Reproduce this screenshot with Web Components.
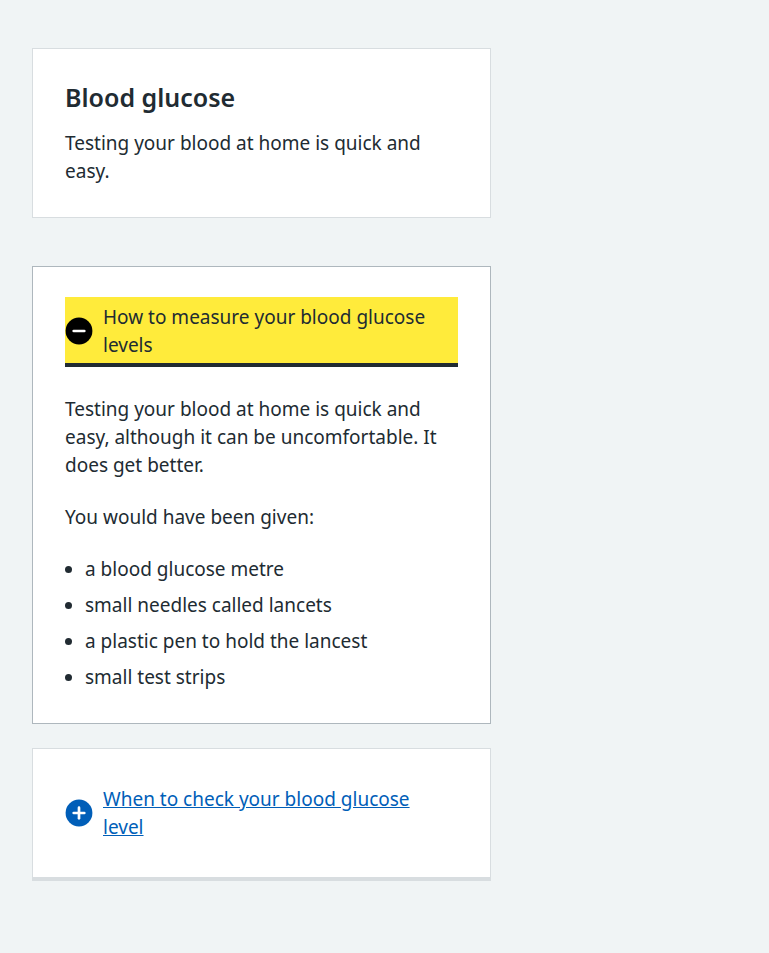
<!DOCTYPE html>
<html lang="en">
<head>
<meta charset="utf-8">
<meta name="viewport" content="width=device-width, initial-scale=1">
<title>Blood glucose</title>
<style>
html { background: #f0f4f5; }
body { margin: 0; color: #212b32; font: 19px/28px "Noto Sans", "Open Sans", sans-serif; }
p, ul { margin: 0; }
ul { padding-left: 20px; display: grid; gap: 8px; }
</style>
</head>
<body>
<page-column>
  <info-card>
    <span slot="heading">Blood glucose</span>
    <p>Testing your blood at home is quick and easy.</p>
  </info-card>
  <expander-group>
    <expander-card open>
      <span slot="summary">How to measure your blood glucose levels</span>
      <p>Testing your blood at home is quick and easy, although it can be uncomfortable. It does get better.</p>
      <p>You would have been given:</p>
      <ul>
        <li>a blood glucose metre</li>
        <li>small needles called lancets</li>
        <li>a plastic pen to hold the lancest</li>
        <li>small test strips</li>
      </ul>
    </expander-card>
    <expander-card>
      <span slot="summary">When to check your blood glucose level</span>
    </expander-card>
  </expander-group>
</page-column>
<script>
class PageColumn extends HTMLElement {
  constructor() {
    super();
    this.attachShadow({ mode: 'open' }).innerHTML = `
      <style>
        :host { display: block; max-width: 992px; margin: 0 auto; padding: 48px 16px; }
        main { box-sizing: border-box; width: calc(100% * 2 / 3); padding: 0 16px; display: flex; flex-direction: column; gap: 48px; }
        @media (max-width: 640px) { main { width: 100%; } }
      </style>
      <main><slot></slot></main>`;
  }
}
customElements.define('page-column', PageColumn);

class InfoCard extends HTMLElement {
  constructor() {
    super();
    this.attachShadow({ mode: 'open' }).innerHTML = `
      <style>
        :host { display: block; background: #fff; border: 1px solid #d8dde0; padding: 32px; }
        h2 { margin: 0 0 16px; font-size: 25px; line-height: 32px; font-weight: 600; }
      </style>
      <h2><slot name="heading"></slot></h2>
      <slot></slot>`;
  }
}
customElements.define('info-card', InfoCard);

class ExpanderGroup extends HTMLElement {
  constructor() {
    super();
    this.attachShadow({ mode: 'open' }).innerHTML = `
      <style>:host { display: flex; flex-direction: column; gap: 24px; }</style>
      <slot></slot>`;
  }
}
customElements.define('expander-group', ExpanderGroup);

class ExpanderCard extends HTMLElement {
  constructor() {
    super();
    this.attachShadow({ mode: 'open' }).innerHTML = `
      <style>
        :host { display: block; }
        details { background: #fff; border: 1px solid #d8dde0; border-bottom-width: 4px; padding: 30px 32px 32px; }
        details[open] { border: 1px solid #aeb7bd; }
        summary { display: flex; align-items: center; gap: 10px; padding: 6px 16px 4px 0; color: #005eb8; text-decoration: underline; list-style: none; cursor: pointer; outline: none; }
        summary::-webkit-details-marker { display: none; }
        details[open] summary, summary:focus-visible { background: #ffeb3b; color: #212b32; text-decoration: none; box-shadow: 0 4px #212b32; }
        svg { flex: none; width: 28px; height: 28px; fill: #005eb8; stroke: #fff; stroke-width: 2.7; stroke-linecap: round; }
        circle { stroke: none; }
        details[open] svg, summary:focus-visible svg { fill: #000; }
        details[open] .plus { display: none; }
        .content { display: flex; flex-direction: column; gap: 24px; padding-top: 32px; }
      </style>
      <details>
        <summary>
          <svg viewBox="0 0 28 28" aria-hidden="true">
            <circle cx="14" cy="14" r="13.4"/>
            <path class="minus" d="M8.7 14h10.6"/>
            <path class="plus" d="M14 8.7v10.6"/>
          </svg>
          <slot name="summary"></slot>
        </summary>
        <div class="content"><slot></slot></div>
      </details>`;
  }
  connectedCallback() {
    this.shadowRoot.querySelector('details').open = this.hasAttribute('open');
  }
}
customElements.define('expander-card', ExpanderCard);
</script>
</body>
</html>
